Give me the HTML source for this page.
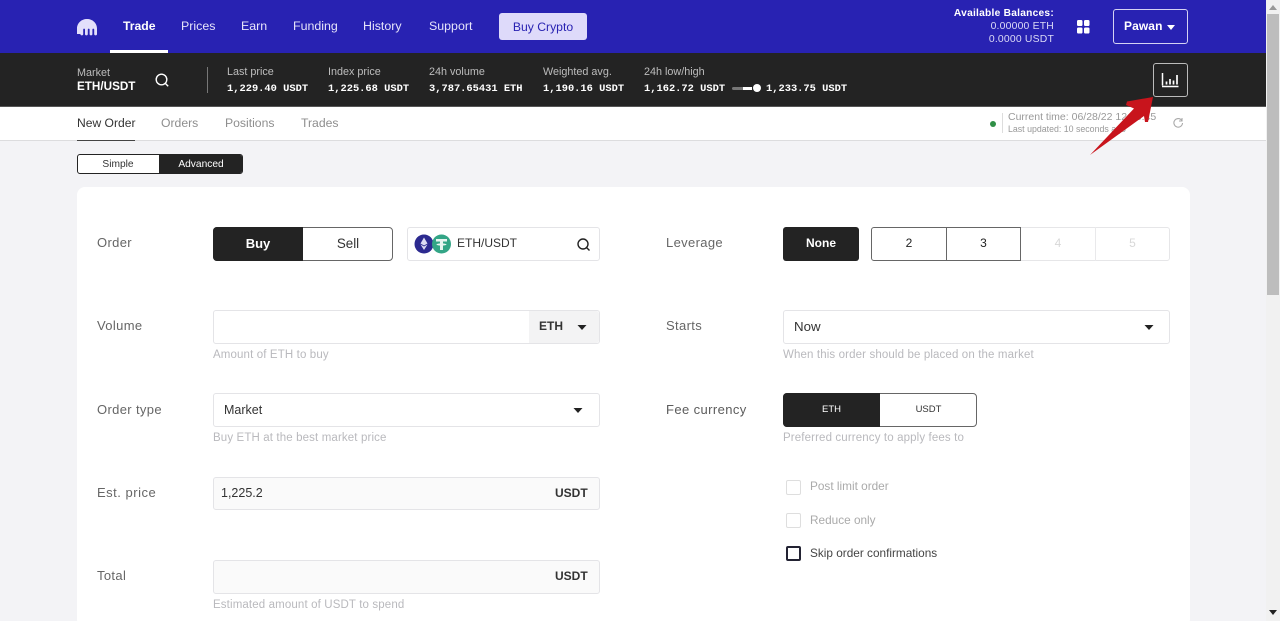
<!DOCTYPE html>
<html><head><meta charset="utf-8"><style>
html,body{margin:0;padding:0;width:1280px;height:621px;overflow:hidden;background:#f3f3f6;font-family:"Liberation Sans",sans-serif}
#w{position:relative;width:1280px;height:621px;overflow:hidden}
.a{position:absolute;box-sizing:border-box}
.t{position:absolute;white-space:nowrap;line-height:16px;height:16px}
.m{font-family:"Liberation Mono",monospace;font-weight:bold;font-size:10.4px;color:#fff}
.n{font-size:12.4px;color:#e6e4fa}
.g{font-size:10.8px;color:#bdbdbd}
.l{font-size:13px;color:#666;letter-spacing:.35px}
.h{font-size:11.5px;color:#b9b9bd;letter-spacing:.13px}
.b{border:1px solid #e4e4e7;border-radius:3px;background:#fff}
.c{text-align:center}
</style></head><body><div id="w">
<div class="a" style="left:0;top:0;width:1266px;height:53px;background:#2822b2"></div>
<svg class="a" style="left:76px;top:18px" width="22" height="18" viewBox="0 0 22 18"><path d="M1 16V10.500C1 5 5.500 1 11 1s10 4 10 9.500V16a1.300 1.300 0 0 1-2.800 0V11.500a.9.9 0 0 0-1.800 0V16a1.400 1.400 0 0 1-2.800 0V11.500a.9.9 0 0 0-1.800 0V16a1.400 1.400 0 0 1-2.800 0V11.500a.9.9 0 0 0-1.800 0V16a1.300 1.300 0 0 1-2.800 0z" fill="#e3dffb"/></svg>
<div class="t n" style="left:123px;top:18px;font-weight:bold;color:#fff;font-size:12.200px">Trade</div>
<div class="a" style="left:110px;top:50px;width:58px;height:3px;background:#fff"></div>
<div class="t n" style="left:181px;top:18px">Prices</div>
<div class="t n" style="left:241px;top:18px">Earn</div>
<div class="t n" style="left:293px;top:18px">Funding</div>
<div class="t n" style="left:363px;top:18px">History</div>
<div class="t n" style="left:429px;top:18px">Support</div>
<div class="a c" style="left:499px;top:13px;width:88px;height:27px;background:#dedafa;border-radius:3px;font-size:12.200px;line-height:28px;color:#2822b2">Buy Crypto</div>
<div class="t" style="right:226px;top:6px;font-size:10.200px;font-weight:bold;color:#fff;letter-spacing:.25px">Available Balances:</div>
<div class="t" style="right:226px;top:19px;font-size:10.400px;color:#dcdaf6;letter-spacing:.2px">0.00000 ETH</div>
<div class="t" style="right:226px;top:32px;font-size:10.400px;color:#dcdaf6;letter-spacing:.2px">0.0000 USDT</div>
<svg class="a" style="left:1076px;top:19px" width="15" height="16"><rect x="1" y="1" width="5.500" height="6" rx="1.400" fill="#fff"/><rect x="8" y="1" width="5.500" height="6" rx="1.400" fill="#fff"/><rect x="1" y="8.500" width="5.500" height="6" rx="1.400" fill="#fff"/><rect x="8" y="8.500" width="5.500" height="6" rx="1.400" fill="#fff"/></svg>
<div class="a" style="left:1113px;top:9px;width:75px;height:35px;border:1px solid #d5d3f3;border-radius:3px"></div>
<div class="t" style="left:1124px;top:18px;font-size:12px;color:#fff;font-weight:bold;letter-spacing:.1px">Pawan</div>
<svg class="a" style="left:1166px;top:24px" width="10" height="7"><path d="M1 1h8L5 6z" fill="#fff"/></svg>

<div class="a" style="left:0;top:53px;width:1266px;height:54px;background:#232323;border-bottom:1px solid #555"></div>
<div class="t g" style="left:77px;top:65px">Market</div>
<div class="t" style="left:77px;top:79px;font-size:11.700px;font-weight:bold;color:#fff">ETH/USDT</div>
<svg class="a" style="left:154px;top:72px" width="16" height="16" fill="none" stroke="#fff" stroke-width="1.400"><circle cx="7.500" cy="7.500" r="5.300"/><path d="M11.200 11.200l3 3"/></svg>
<div class="a" style="left:207px;top:67px;width:1px;height:26px;background:#777"></div>
<div class="t g" style="left:227px;top:64px">Last price</div><div class="t m" style="left:227px;top:81px">1,229.40 USDT</div>
<div class="t g" style="left:328px;top:64px">Index price</div><div class="t m" style="left:328px;top:81px">1,225.68 USDT</div>
<div class="t g" style="left:429px;top:64px">24h volume</div><div class="t m" style="left:429px;top:81px">3,787.65431 ETH</div>
<div class="t g" style="left:543px;top:64px">Weighted avg.</div><div class="t m" style="left:543px;top:81px">1,190.16 USDT</div>
<div class="t g" style="left:644px;top:64px">24h low/high</div><div class="t m" style="left:644px;top:81px">1,162.72 USDT</div>
<div class="a" style="left:732px;top:87px;width:20px;height:3px;border-radius:2px;background:#777"></div>
<div class="a" style="left:743px;top:87px;width:9px;height:3px;background:#fff"></div>
<div class="a" style="left:753px;top:84px;width:8px;height:8px;border-radius:50%;background:#fff"></div>
<div class="t m" style="left:766px;top:81px">1,233.75 USDT</div>
<div class="a" style="left:1153px;top:63px;width:35px;height:34px;border:1px solid #bbb;border-radius:3px"></div>
<svg class="a" style="left:1161px;top:72px" width="19" height="17" fill="none" stroke="#fff"><path d="M1.500 1v12.500M1 14.500h16.500" stroke-width="1.500"/><path d="M5.500 12.500V9.500M9 12.500V7M12.500 12.500V8.500M16 12.500V3" stroke-width="1.700"/></svg>

<div class="a" style="left:0;top:107px;width:1266px;height:34px;background:#fff;border-bottom:1px solid #dcdcde"></div>
<div class="t" style="left:77px;top:115px;font-size:12.100px;color:#333">New Order</div>
<div class="a" style="left:77px;top:140px;width:58px;height:1px;background:#444"></div>
<div class="t" style="left:161px;top:115px;font-size:12.200px;color:#8e8e8e">Orders</div>
<div class="t" style="left:225px;top:115px;font-size:12.200px;color:#8e8e8e">Positions</div>
<div class="t" style="left:301px;top:115px;font-size:12.200px;color:#8e8e8e">Trades</div>
<div class="a" style="left:990px;top:121px;width:6px;height:6px;border-radius:50%;background:#2f8f46"></div>
<div class="a" style="left:1002px;top:113px;width:1px;height:20px;background:#ddd"></div>
<div class="t" style="left:1008px;top:109px;font-size:10.500px;color:#999">Current time: 06/28/22 12:10:45</div>
<div class="t" style="left:1008px;top:121px;font-size:8.800px;color:#999">Last updated: 10 seconds ago</div>
<svg class="a" style="left:1172px;top:117px" width="12" height="12" fill="none" stroke="#aaa" stroke-width="1.100"><path d="M9.800 3.500A4.300 4.300 0 1 0 10.500 6"/><path d="M10 1v3H7"/></svg>

<div class="a" style="left:77px;top:154px;width:166px;height:20px;border:1px solid #232323;border-radius:3px;background:#fff;overflow:hidden"><div class="a" style="left:81px;top:-1px;width:85px;height:20px;background:#232323"></div></div>
<div class="t c" style="left:77px;width:82px;top:157px;font-size:10.200px;color:#333">Simple</div>
<div class="t c" style="left:159px;width:84px;top:157px;font-size:10.200px;color:#fff">Advanced</div>

<div class="a" style="left:77px;top:187px;width:1113px;height:440px;background:#fff;border-radius:8px"></div>

<div class="t l" style="left:97px;top:235px">Order</div>
<div class="a" style="left:213px;top:227px;width:180px;height:34px;border:1px solid #666;border-radius:4px;background:#fff"></div>
<div class="a c" style="left:213px;top:227px;width:90px;height:34px;background:#232323;border-radius:4px 0 0 4px;color:#fff;font-size:13px;font-weight:bold;line-height:34px">Buy</div>
<div class="t c" style="left:303px;width:90px;top:236px;font-size:13.400px;color:#333">Sell</div>
<div class="a b" style="left:407px;top:227px;width:193px;height:34px"></div>
<svg class="a" style="left:414px;top:234px" width="38" height="20"><circle cx="10" cy="10" r="9.500" fill="#2c2a8f"/><path d="M10 3.500l3.500 6-3.500 2-3.500-2zM6.500 10.500l3.500 2 3.500-2L10 16z" fill="#dcdcf2"/><circle cx="27.500" cy="10" r="9.500" fill="#33a586"/><path d="M22 5h11v2.500h-4v2c2 .1 3.500.5 3.500 1s-1.500.9-3.500 1V16h-3v-4.500c-2-.1-3.500-.5-3.500-1s1.500-.9 3.500-1v-2h-4z" fill="#e8f5f1"/></svg>
<div class="t" style="left:457px;top:235px;font-size:12px;color:#333">ETH/USDT</div>
<svg class="a" style="left:576px;top:237px" width="15" height="15" fill="none" stroke="#222" stroke-width="1.400"><circle cx="7" cy="7" r="5"/><path d="M10.500 10.500l3 3"/></svg>

<div class="t l" style="left:97px;top:318px">Volume</div>
<div class="a b" style="left:213px;top:310px;width:387px;height:34px"></div>
<div class="a" style="left:529px;top:311px;width:70px;height:32px;background:#f3f3f4;border-radius:0 3px 3px 0"></div>
<div class="t" style="left:539px;top:318px;font-size:12px;font-weight:bold;color:#333">ETH</div>
<svg class="a" style="left:577px;top:324px" width="10" height="7"><path d="M0.500 1h9L5 6z" fill="#222"/></svg>
<div class="t h" style="left:213px;top:347px">Amount of ETH to buy</div>

<div class="t l" style="left:97px;top:402px">Order type</div>
<div class="a b" style="left:213px;top:393px;width:387px;height:34px"></div>
<div class="t" style="left:224px;top:402px;font-size:12.500px;color:#333">Market</div>
<svg class="a" style="left:573px;top:407px" width="10" height="7"><path d="M0.500 1h9L5 6z" fill="#222"/></svg>
<div class="t h" style="left:213px;top:430px">Buy ETH at the best market price</div>

<div class="t l" style="left:97px;top:485px;letter-spacing:.5px">Est. price</div>
<div class="a b" style="left:213px;top:477px;width:387px;height:33px;background:#fafafa"></div>
<div class="t" style="left:221px;top:485px;font-size:12.500px;color:#333">1,225.2</div>
<div class="t" style="left:555px;top:485px;font-size:12px;font-weight:bold;color:#333">USDT</div>

<div class="t l" style="left:97px;top:568px">Total</div>
<div class="a b" style="left:213px;top:560px;width:387px;height:34px;background:#fafafa"></div>
<div class="t" style="left:555px;top:568px;font-size:12px;font-weight:bold;color:#333">USDT</div>
<div class="t h" style="left:213px;top:597px">Estimated amount of USDT to spend</div>

<div class="t l" style="left:666px;top:235px">Leverage</div>
<div class="a c" style="left:783px;top:227px;width:76px;height:34px;background:#232323;border-radius:3px;color:#fff;font-size:12px;font-weight:bold;line-height:33px">None</div>
<div class="a" style="left:1020px;top:227px;width:150px;height:34px;border:1px solid #e6e6e8;border-radius:0 3px 3px 0"></div>
<div class="a" style="left:1095px;top:227px;width:1px;height:34px;background:#e9e9eb"></div>
<div class="a c" style="left:871px;top:227px;width:76px;height:34px;border:1px solid #666;border-radius:3px 0 0 3px;font-size:12px;line-height:31px;color:#222">2</div>
<div class="a c" style="left:946px;top:227px;width:75px;height:34px;border:1px solid #666;font-size:12px;line-height:31px;color:#222">3</div>
<div class="t c" style="left:1021px;width:74px;top:235px;font-size:12px;color:#d8d8d8">4</div>
<div class="t c" style="left:1095px;width:75px;top:235px;font-size:12px;color:#d8d8d8">5</div>

<div class="t l" style="left:666px;top:318px">Starts</div>
<div class="a b" style="left:783px;top:310px;width:387px;height:34px"></div>
<div class="t" style="left:794px;top:319px;font-size:13.300px;color:#333">Now</div>
<svg class="a" style="left:1144px;top:324px" width="10" height="7"><path d="M0.500 1h9L5 6z" fill="#222"/></svg>
<div class="t h" style="left:783px;top:347px">When this order should be placed on the market</div>

<div class="t l" style="left:666px;top:402px;letter-spacing:.4px;color:#5c5c5c">Fee currency</div>
<div class="a" style="left:783px;top:393px;width:194px;height:34px;border:1px solid #666;border-radius:4px;background:#fff"></div>
<div class="a c" style="left:783px;top:393px;width:97px;height:34px;background:#232323;border-radius:4px 0 0 4px;color:#fff;font-size:9.500px;line-height:34px">ETH</div>
<div class="t c" style="left:880px;width:97px;top:402px;font-size:9.500px;color:#333">USDT</div>
<div class="t h" style="left:783px;top:430px">Preferred currency to apply fees to</div>

<div class="a" style="left:786px;top:480px;width:15px;height:15px;border:1.500px solid #dedede;border-radius:2px"></div>
<div class="t" style="left:810px;top:478px;font-size:11.800px;color:#aaa">Post limit order</div>
<div class="a" style="left:786px;top:513px;width:15px;height:15px;border:1.500px solid #dedede;border-radius:2px"></div>
<div class="t" style="left:810px;top:512px;font-size:11.800px;color:#aaa">Reduce only</div>
<div class="a" style="left:786px;top:546px;width:15px;height:15px;border:2px solid #232333;border-radius:2px"></div>
<div class="t" style="left:810px;top:545px;font-size:11.800px;color:#444">Skip order confirmations</div>

<svg class="a" style="left:1085px;top:92px" width="75" height="68"><path d="M68 5L42 9.500 41 13 49 16.500 5 63 59 24 60 30 63 30z" fill="#c8141c"/></svg>

<div class="a" style="left:1266px;top:0;width:14px;height:621px;background:#f1f1f1"></div>
<div class="a" style="left:1267px;top:14px;width:12px;height:281px;background:#bdbdbd"></div>
<svg class="a" style="left:1268px;top:4px" width="10" height="7"><path d="M1 6h8L5 1z" fill="#999"/></svg>
<svg class="a" style="left:1268px;top:609px" width="10" height="7"><path d="M1 1h8L5 6z" fill="#222"/></svg>
</div></body></html>
